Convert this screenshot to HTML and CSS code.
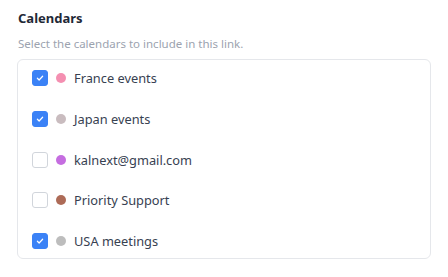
FILE: index.html
```html
<!DOCTYPE html>
<html lang="en">
<head>
    <meta charset="UTF-8">
    <meta name="viewport" content="width=device-width, initial-scale=1.0">
    <title>Calendars</title>
    <link rel="stylesheet" href="styles.css">
</head>
<body>
<div class="calendars-section">
    <h3>Calendars</h3>
    <p class="hint">Select the calendars to include in this link.</p>

    <div class="calendar-list">
        <label class="calendar-row">
            <span class="check checked"><svg viewBox="0 0 16 16"><path d="M5 8.3l2 2 4-4.3"/></svg></span>
            <span class="dot" style="background:#f48fb1"></span>
            <span class="name">France events</span>
        </label>
        <label class="calendar-row">
            <span class="check checked"><svg viewBox="0 0 16 16"><path d="M5 8.3l2 2 4-4.3"/></svg></span>
            <span class="dot" style="background:#c9bcbf"></span>
            <span class="name">Japan events</span>
        </label>
        <label class="calendar-row">
            <span class="check"></span>
            <span class="dot" style="background:#c56de0"></span>
            <span class="name">kalnext@gmail.com</span>
        </label>
        <label class="calendar-row">
            <span class="check"></span>
            <span class="dot" style="background:#ad6b57"></span>
            <span class="name">Priority Support</span>
        </label>
        <label class="calendar-row">
            <span class="check checked"><svg viewBox="0 0 16 16"><path d="M5 8.3l2 2 4-4.3"/></svg></span>
            <span class="dot" style="background:#bdbdbd"></span>
            <span class="name">USA meetings</span>
        </label>
    </div>
</div>
</body>
</html>
```
FILE: styles.css
```css
body {
    font-family: 'Noto Sans', sans-serif;
    margin: 0;
    padding: 0;
    background-color: #fff;
}

.calendars-section {
    padding: 9px 17px 0 17px;
    width: 414px;
}

h3 {
    margin: 0 0 0 1px;
    font-size: 13px;
    line-height: 18px;
    font-weight: 700;
    color: #1f2937;
}

.hint {
    margin: 9px 0 0 1px;
    font-size: 11.5px;
    line-height: 16px;
    color: #9ca3af;
}

.calendar-list {
    margin-top: 7px;
    border: 1px solid #e5e7eb;
    border-radius: 6px;
    padding: 10px 14px 9px 14px;
    display: flex;
    flex-direction: column;
    gap: 24.75px;
}

.calendar-row {
    display: flex;
    align-items: center;
    height: 16px;
}

.check {
    width: 16px;
    height: 16px;
    box-sizing: border-box;
    border: 1px solid #d1d5db;
    border-radius: 3px;
    background-color: #fff;
    display: flex;
    align-items: center;
    justify-content: center;
}

.check.checked {
    background-color: #3b82f6;
    border-color: #3b82f6;
}

.check svg {
    width: 16px;
    height: 16px;
    fill: none;
    stroke: #fff;
    stroke-width: 1.4;
    stroke-linecap: round;
    stroke-linejoin: round;
}

.dot {
    width: 10px;
    height: 10px;
    border-radius: 50%;
    margin-left: 8px;
}

.name {
    margin-left: 8px;
    font-size: 12.8px;
    color: #374151;
}
```
